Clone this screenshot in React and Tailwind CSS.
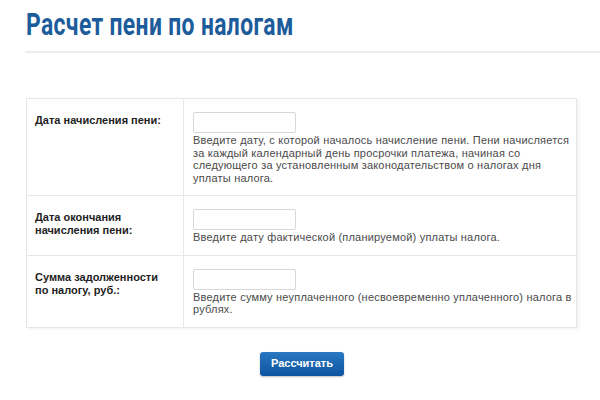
import React from "react";

const rows = [
  {
    label: ["Дата начисления пени:"],
    desc: "Введите дату, с которой началось начисление пени. Пени начисляется за каждый календарный день просрочки платежа, начиная со следующего за установленным законодательством о налогах дня уплаты налога.",
  },
  {
    label: ["Дата окончания", "начисления пени:"],
    desc: "Введите дату фактической (планируемой) уплаты налога.",
  },
  {
    label: ["Сумма задолженности", "по налогу, руб.:"],
    desc: "Введите сумму неуплаченного (несвоевременно уплаченного) налога в рублях.",
  },
];

export default function App() {
  return (
    <div className="w-[600px] h-[400px] bg-white overflow-hidden" style={{ fontFamily: '"Liberation Sans", Arial, sans-serif' }}>
      <div className="pl-[26px] pt-[6px] h-[44px]">
        <h1
          className="inline-block text-[32px] leading-[36px] font-bold text-[#1d5c9b] whitespace-nowrap origin-left scale-x-[0.715] tracking-[0.5px]"
          style={{ fontFamily: 'Roboto, "Liberation Sans", sans-serif' }}
        >
          Расчет пени по налогам
        </h1>
      </div>
      <div className="ml-[25px] mt-[7px] h-[2px] bg-[#ededed]" />
      <div className="ml-[26px] mt-[45px] w-[551px] border border-[#e3e8ec] shadow-[2px_1px_3px_rgba(0,0,0,0.06)]">
        {rows.map((r, i) => (
          <div key={i} className={`grid grid-cols-[156px_393px] ${i > 0 ? "border-t border-[#e3e8ec]" : ""}`}>
            <div className="pl-[8px] pt-[15px] text-[11px] leading-[13px] font-bold text-[#1e1e1e]">
              {r.label.map((l, j) => (
                <div key={j}>{l}</div>
              ))}
            </div>
            <div className="border-l border-[#e3e8ec] pl-[9px] pr-[1px] pt-[13px] pb-[11px]">
              <div className="w-[103px] h-[21px] border border-[#d8d8d8] rounded-[2px] bg-white" />
              <div className="mt-[1px] text-[11px] tracking-[0.2px] leading-[12.5px] text-[#4a4a4a]">{r.desc}</div>
            </div>
          </div>
        ))}
      </div>
      <div className="flex justify-center pt-[24px] pl-[4px]">
        <button className="w-[84px] h-[24px] rounded-[3px] bg-gradient-to-b from-[#2a78c2] to-[#0b539f] text-white text-[11px] font-bold shadow-[0_1px_2px_rgba(0,0,0,0.25)]">
          Рассчитать
        </button>
      </div>
    </div>
  );
}
